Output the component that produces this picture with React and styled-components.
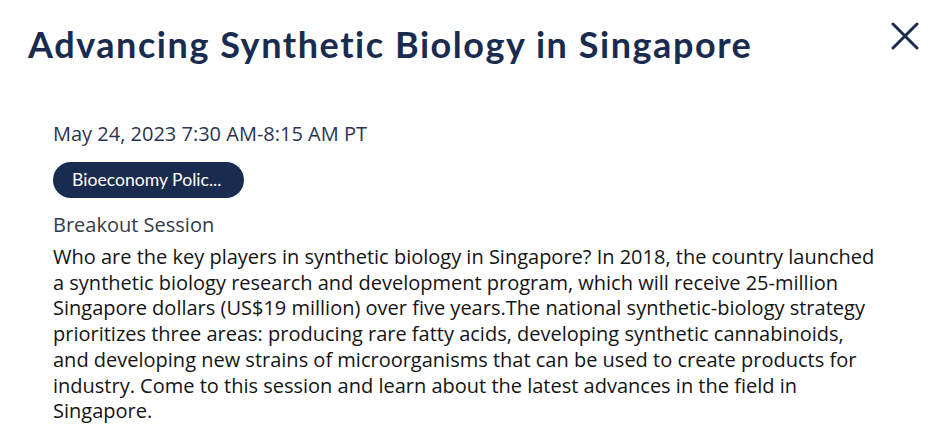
import styled, { createGlobalStyle } from "styled-components"

const GlobalStyle = createGlobalStyle`
    body {
        margin: 0;
        background: #ffffff;
        font-family: "Open Sans", sans-serif;
    }
`

export default function App(){
    return (
        <>
            <GlobalStyle />
            <Modal>
                <Header>
                    <Title>Advancing Synthetic Biology in Singapore</Title>
                    <CloseButton aria-label="Close">
                        <svg width="28" height="28" viewBox="0 0 28 28">
                            <path d="M2 2 L26 26 M26 2 L2 26" stroke="#1a2b50" strokeWidth="3" strokeLinecap="round" />
                        </svg>
                    </CloseButton>
                </Header>
                <Body>
                    <DateLine>May 24, 2023 7:30 AM-8:15 AM PT</DateLine>
                    <Tag>Bioeconomy Polic...</Tag>
                    <SessionType>Breakout Session</SessionType>
                    <Description>
                        Who are the key players in synthetic biology in Singapore? In 2018, the country launched a synthetic biology research and development program, which will receive 25-million Singapore dollars (US$19 million) over five years.The national synthetic-biology strategy prioritizes three areas: producing rare fatty acids, developing synthetic cannabinoids, and developing new strains of microorganisms that can be used to create products for industry. Come to this session and learn about the latest advances in the field in Singapore.
                    </Description>
                </Body>
            </Modal>
        </>
    )
}

const Modal = styled.div`
    width: 931px;
    height: 437px;
    box-sizing: border-box;
    padding: 19px 12px 0 28px;
    background: #ffffff;
`
const Header = styled.div`
    display: flex;
    justify-content: space-between;
    align-items: flex-start;
`
const Title = styled.h1`
    margin: 0;
    font-family: "Lato", sans-serif;
    font-weight: 700;
    font-size: 36px;
    letter-spacing: 1.55px;
    line-height: 50px;
    color: #1a2b50;
`
const CloseButton = styled.button`
    border: none;
    background: none;
    padding: 0;
    margin: 3px 0 0 0;
    width: 28px;
    height: 28px;
    cursor: pointer;
    display: flex;
`
const Body = styled.div`
    padding: 53px 0 0 25px;
    display: flex;
    flex-direction: column;
    align-items: flex-start;
`
const DateLine = styled.div`
    font-size: 20px;
    line-height: 24px;
    color: #2a3550;
`
const Tag = styled.div`
    margin-top: 16px;
    background: #1a2b50;
    color: #ffffff;
    font-family: "Lato", sans-serif;
    font-size: 17.6px;
    height: 36px;
    line-height: 36px;
    padding: 0 23px 0 19px;
    border-radius: 18px;
`
const SessionType = styled.div`
    margin-top: 15px;
    font-size: 20px;
    line-height: 24px;
    color: #333a48;
`
const Description = styled.p`
    margin: 7px 0 0 0;
    width: 830px;
    font-size: 20px;
    line-height: 25.7px;
    color: #141414;
`
